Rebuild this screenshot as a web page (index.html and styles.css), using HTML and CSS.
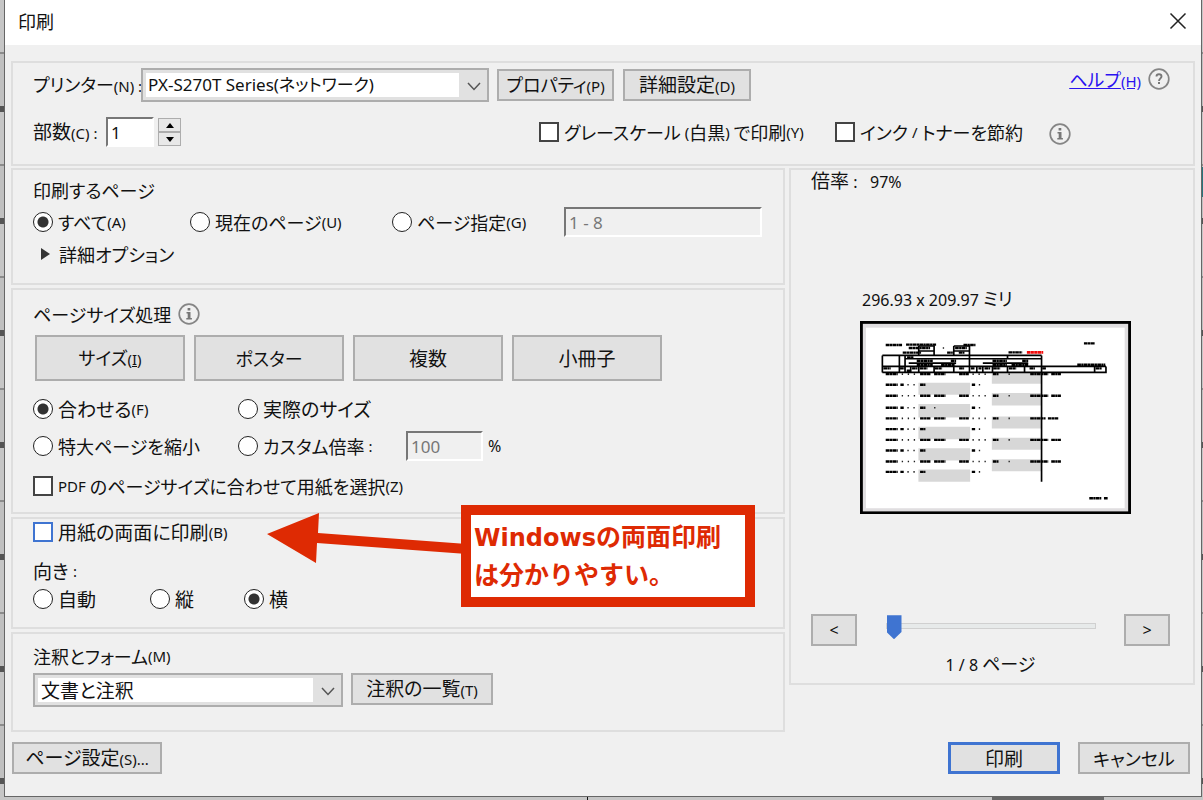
FILE: index.html
```
<!DOCTYPE html>
<html lang="ja">
<head>
<meta charset="utf-8">
<title>印刷</title>
<link rel="stylesheet" href="styles.css">
</head>
<body>
<main class="dialog">
  <header class="titlebar">
    <h1 class="title">印刷</h1>
    <button class="close" type="button" aria-label="閉じる">
      <svg width="18" height="18" viewBox="0 0 18 18"><path d="M1.500 1.500 16.500 16.500M16.500 1.500 1.500 16.500" fill="none" stroke="#222" stroke-width="1.500"/></svg>
    </button>
  </header>

  <div class="content">
    <section class="group printer">
      <div class="printer-row">
        <label class="printer-label kana" for="printer">プリンター<span class="key">(N) :</span></label>
        <div class="combo combo-printer">
          <select id="printer" class="latin"><option>PX-S270T Series(ネットワーク)</option></select>
          <svg class="chevron" width="14" height="9" viewBox="0 0 14 9"><path d="M1 1 7 7.500 13 1" fill="none" stroke="#555" stroke-width="1.500"/></svg>
        </div>
        <button class="btn properties kana" type="button">プロパティ<span class="key">(P)</span></button>
        <button class="btn advanced" type="button">詳細設定<span class="key">(D)</span></button>
        <a class="help kana" href="#">ヘルプ<span class="key">(H)</span></a>
        <svg class="round-icon" width="22" height="22" viewBox="0 0 22 22"><circle cx="11" cy="11" r="9.800" fill="none" stroke="#858585" stroke-width="1.700"/><path d="M8.500 8.600C8.500 5.400 13.500 5.500 13.500 8.500C13.500 10.300 11 10.500 11 13" fill="none" stroke="#777" stroke-width="1.900"/><rect x="10" y="14" width="2" height="2" fill="#777"/></svg>
      </div>
      <div class="copies-row">
        <label class="copies-label" for="copies">部数<span class="key">(C) :</span></label>
        <input id="copies" class="field copies" type="text" value="1">
        <span class="spinner">
          <button type="button" aria-label="増やす"><svg width="8" height="5" viewBox="0 0 8 5"><path d="M0 5 4 0 8 5z"/></svg></button>
          <button type="button" aria-label="減らす"><svg width="8" height="5" viewBox="0 0 8 5"><path d="M0 0 4 5 8 0z"/></svg></button>
        </span>
        <label class="option gray-option kana"><input type="checkbox">グレースケール <span class="key">(</span>白黒<span class="key">)</span> で印刷<span class="key">(Y)</span></label>
        <label class="option ink-option kana"><input type="checkbox">インク <span class="key">/</span> トナーを節約</label>
        <svg class="round-icon ink-info" width="22" height="22" viewBox="0 0 22 22"><circle cx="11" cy="11" r="9.800" fill="none" stroke="#858585" stroke-width="1.700"/><path d="M9.600 5h2.700v2.500H9.600zM8.500 9h4v6h1.400v1.600H8.300V15h1.400v-4.500H8.500z" fill="#777"/></svg>
      </div>
    </section>

    <div class="columns">
      <div class="settings">
        <section class="group pages">
          <h2 class="heading kana">印刷するページ</h2>
          <div class="pages-row">
            <label class="option kana"><input type="radio" name="range" checked>すべて<span class="key">(A)</span></label>
            <label class="option kana"><input type="radio" name="range">現在のページ<span class="key">(U)</span></label>
            <label class="option kana"><input type="radio" name="range">ページ指定<span class="key">(G)</span></label>
            <input class="field" type="text" value="1 - 8" aria-label="ページ指定" disabled>
          </div>
          <button class="more kana" type="button"><svg width="10" height="12" viewBox="0 0 10 12"><path d="M0 0 9 6 0 12z" fill="#333"/></svg>詳細オプション</button>
        </section>

        <section class="group sizing">
          <h2 class="heading kana">ページサイズ処理
            <svg class="round-icon" width="22" height="22" viewBox="0 0 22 22"><circle cx="11" cy="11" r="9.800" fill="none" stroke="#858585" stroke-width="1.700"/><path d="M9.600 5h2.700v2.500H9.600zM8.500 9h4v6h1.400v1.600H8.300V15h1.400v-4.500H8.500z" fill="#777"/></svg>
          </h2>
          <div class="modes">
            <button class="btn mode kana" type="button">サイズ<span class="key">(<u>I</u>)</span></button>
            <button class="btn mode kana" type="button">ポスター</button>
            <button class="btn mode" type="button">複数</button>
            <button class="btn mode" type="button">小冊子</button>
          </div>
          <div class="scale-grid">
            <label class="option"><input type="radio" name="scale" checked>合わせる<span class="key">(F)</span></label>
            <label class="option"><input type="radio" name="scale">実際のサイズ</label>
            <label class="option kana"><input type="radio" name="scale">特大ページを縮小</label>
            <div class="custom">
              <label class="option custom-label kana"><input type="radio" name="scale">カスタム倍率 <span class="key">:</span></label>
              <input class="field custom-value" type="text" value="100" aria-label="カスタム倍率" disabled>
              <span class="num">%</span>
            </div>
          </div>
          <label class="option paper kana"><input type="checkbox"><span class="key">PDF</span> のページサイズに合わせて用紙を選択<span class="key">(Z)</span></label>
        </section>

        <section class="group duplex">
          <label class="option both"><input class="hot" type="checkbox">用紙の両面に印刷<span class="key">(B)</span></label>
          <h2 class="heading">向き <span class="key">:</span></h2>
          <div class="orientation">
            <label class="option"><input type="radio" name="orient">自動</label>
            <label class="option"><input type="radio" name="orient">縦</label>
            <label class="option"><input type="radio" name="orient" checked>横</label>
          </div>
          <svg class="arrow" width="200" height="54" viewBox="0 0 200 54"><path d="M0 21 52 0 51 20 200 31V41L50 30 49 50z" fill="#de2a03"/></svg>
          <p class="callout"><span class="callout-latin">Windows</span>の両面印刷<br>は分かりやすい。</p>
        </section>

        <section class="group comments">
          <label class="heading kana" for="forms">注釈とフォーム<span class="key">(M)</span></label>
          <div class="comments-row">
            <div class="combo combo-forms">
              <select id="forms"><option>文書と注釈</option></select>
              <svg class="chevron" width="14" height="9" viewBox="0 0 14 9"><path d="M1 1 7 7.500 13 1" fill="none" stroke="#555" stroke-width="1.500"/></svg>
            </div>
            <button class="btn summary" type="button">注釈の一覧<span class="key">(T)</span></button>
          </div>
        </section>
      </div>

      <section class="group preview">
        <p class="zoom">倍率 <span class="num">: &nbsp; 97%</span></p>
        <figure class="sheet">
          <figcaption class="kana"><span class="num">296.93 x 209.97</span> ミリ</figcaption>
          <svg class="page" viewBox="30 34 812 579">
            <rect x="34" y="38" width="804" height="571" fill="#e0dee0" stroke="#000" stroke-width="9"/>
            <rect x="48" y="54" width="775" height="541" fill="#fff"/>
            <g fill="#d7d7d7">
              <path d="M205 219h155v36H205zM205 283h155v40H205zM205 351h155v37H205zM205 415h155v37H205zM205 479h155v37H205z"/>
              <path d="M425 190h149v32H425zM425 250h149v37H425zM425 320h149v36H425zM425 384h149v36H425zM425 448h149v36H425z"/>
            </g>
            <g fill="none" stroke="#000" stroke-width="5">
              <path d="M97 137H574M97 137V188M148 137V188M165 137V188M165 147H574M97 170H767M97 188H767V170M206 108V137M206 109H252V137M206 124H252M311 109H358V188M311 109V137M311 124H358M574 137V516M176 160H318M398 160H534M182 170V188M206 170V188M252 170V188M311 170V188M380 170V188M398 170V188M427 170V188M472 137V147M472 170V188M523 170V188M733 170V188"/>
            </g>
            <g fill="none" stroke="#000" stroke-width="7" stroke-dasharray="11 1 7 1">
              <path d="M107 106H156M168 105H258M340 106H376M176 115H240M315 115H350M158 129H213M291 129H308M326 129H343M475 128H516M701 101H734M171 143H191M200 153H248M302 153H318M200 165H248M273 165H315M427 153H470M516 153H534M427 165H470M484 165H534M681 165H765M100 176H122M150 176H164M170 183H180M186 176H202M209 176H232M254 176H276M327 176H342M362 176H374M385 176H394M403 176H420M429 176H450M476 176H498M538 176H554M576 176H587M736 176H754M717 565H753M761 565H772"/>
              <path d="M107 193H143M210 193H241M252 193H286M327 193H356M428 193H445M540 193H594M603 193H632"/>
              <path d="M107 225H143M151 225H161M210 225H226M365 225H375"/>
              <path d="M107 258H143M210 258H241M252 258H286M327 258H356M428 258H445M540 258H594M603 258H632"/>
              <path d="M107 294H143M151 294H161M210 294H226M365 294H375"/>
              <path d="M107 326H143M210 326H241M252 326H286M327 326H356M428 326H445M540 326H586M593 326H625"/>
              <path d="M107 358H143M151 358H161M210 358H226M365 358H375"/>
              <path d="M107 390H143M210 390H241M252 390H286M327 390H356M428 390H445M540 390H594M603 390H632"/>
              <path d="M107 422H143M151 422H161M210 422H226M365 422H375"/>
              <path d="M107 455H143M210 455H241M252 455H286M327 455H356M428 455H445M540 455H594M603 455H632"/>
              <path d="M107 486H143M151 486H161M210 486H226M365 486H375"/>
            </g>
            <g fill="none" stroke="#222" stroke-width="5">
              <path stroke-dasharray="4 14" d="M155 193H202M155 258H202M155 326H202M155 390H202M155 455H202M172 225H202M172 294H202M172 358H202M172 422H202M172 486H202M367 193H415M367 258H415M367 326H415M367 390H415M367 455H415M386 225H392M386 294H392M386 358H392M386 422H392M386 486H392M475 193H480M475 258H480M475 326H480M475 390H480M475 455H480M278 115H285M252 294H258"/>
            </g>
            <path d="M530 128H579" stroke="#f00b0b" stroke-width="8" stroke-dasharray="10 1"/>
          </svg>
        </figure>
        <div class="pager">
          <button class="btn step" type="button">&lt;</button>
          <input class="slider" type="range" min="1" max="8" value="1" aria-label="ページ">
          <button class="btn step" type="button">&gt;</button>
        </div>
        <p class="page-count kana"><span class="num">1 / 8</span> ページ</p>
      </section>
    </div>

    <footer class="footer">
      <button class="btn setup" type="button">ページ設定<span class="key">(S)...</span></button>
      <button class="btn action default" type="button">印刷</button>
      <button class="btn action kana" type="button">キャンセル</button>
    </footer>
  </div>
</main>
</body>
</html>
```
FILE: styles.css
```
* { box-sizing: border-box; }

body {
  margin: 0;
  min-height: 100vh;
  padding: 0 1px 3px 4px;
  display: flex;
  background:
    linear-gradient(#111, #111) 587px 100% / 1px 3px no-repeat,
    linear-gradient(#666, #666) 992px 100% / 112px 3px no-repeat,
    linear-gradient(#27757d, #27757d) 100% 167px / 1px 30px no-repeat,
    repeating-linear-gradient(#c6c6c6 0 52px, #8c8c8c 52px 54px, #c0c0c0 54px 106px, #555 106px 112px);
  color: #111;
  font: 19px/24px "Noto Sans CJK JP", sans-serif;
  font-feature-settings: "palt";
}

button, input, select { font: inherit; font-feature-settings: inherit; color: inherit; }
h1, h2, p, figure { margin: 0; font-size: 19px; font-weight: 400; }

.key, .num { font-family: "Noto Sans", sans-serif; white-space: nowrap; }
.key { font-size: 15px; }
.num { font-size: 16px; }

.dialog {
  flex: 1;
  display: flex;
  flex-direction: column;
  background: #f0f0f0;
  border: 1px solid #666;
  border-top: 0;
}

.titlebar {
  display: flex;
  align-items: center;
  justify-content: space-between;
  height: 45px;
  padding: 0 14px 4px 13px;
  background: #fff;
}
.title { font-size: 18px; }
.close { display: flex; padding: 0; border: 0; background: none; }

.content { flex: 1; padding: 16px 6px 0; }
.group { position: relative; border: 2px solid #dedede; }

.printer { height: 105px; padding: 5px 23px 0 20px; }
.printer-row { display: flex; align-items: center; height: 34px; }
.printer-label { width: 108px; white-space: nowrap; }
.copies-row { display: flex; align-items: center; height: 32px; margin-top: 14px; }
.copies-label { width: 73px; white-space: nowrap; }

.combo { position: relative; background: #e1e1e1; border: 2px solid #adadad; padding: 3px 28px 3px 3px; }
.combo select {
  appearance: none;
  display: block;
  width: 100%;
  height: 24px;
  padding: 0 3px;
  border: 0;
  background: #fff;
  line-height: 22px;
}
.combo .latin { font-family: "Noto Sans", "Noto Sans CJK JP", sans-serif; font-size: 17px; padding: 0 2px; }
.chevron { position: absolute; right: 6px; top: 12px; pointer-events: none; }
.combo-printer { width: 348px; }
.combo-forms { width: 310px; }

.btn {
  padding: 0;
  border: 2px solid #adadad;
  background: #e1e1e1;
  height: 32px;
  line-height: 24px;
  white-space: nowrap;
}
.properties { width: 117px; margin-left: 8px; }
.advanced { width: 128px; margin-left: 9px; }
.help { margin: 0 7px 10px auto; color: #2a12f0; white-space: nowrap; text-decoration: underline; }
.printer-row .round-icon { margin-bottom: 12px; }
.round-icon { flex: none; }

.field {
  height: 30px;
  padding: 0 3px;
  border: 2px solid;
  border-color: #777 #fff #fff #777;
  background: #fff;
  font: 17px/24px "Noto Sans", sans-serif;
  border-radius: 0;
  min-width: 0;
}
.field:disabled { background: #f0f0f0; color: #777; }
.copies { width: 48px; margin-right: 4px; }
.spinner { display: grid; width: 23px; height: 28px; }
.spinner button { display: grid; place-items: center; padding: 0; border: 1px solid #adadad; background: #e8e8e8; }

.option { display: flex; align-items: center; white-space: pre; }
.option input {
  appearance: none;
  flex: none;
  width: 20px;
  height: 20px;
  margin: 0 5px 0 0;
  border: 2px solid #444;
  background: #fff;
}
.option input[type="radio"] { border-radius: 50%; border-width: 1px; border-color: #222; }
.option input[type="radio"]:checked { background: radial-gradient(#333 0 5px, #fff 6px); }
.option .hot { border-color: #3f74d1; }
.gray-option { margin-left: auto; width: 296px; }
.ink-option { width: 214px; }
.ink-info { margin: 4px 99px 0 0; }

.columns { display: grid; grid-template-columns: minmax(0, 1fr) 406px; gap: 4px; align-items: start; margin-top: 2px; }
.settings { display: grid; gap: 3px; }
.heading { display: flex; align-items: center; white-space: pre; }

.pages { min-height: 117px; padding: 4px 20px 0; }
.pages .heading, .pages-row, .more { height: 32px; }
.pages-row { display: grid; grid-template-columns: 157px 202px 172px 198px; align-items: center; }
.more { display: flex; align-items: center; gap: 8px; padding: 0 8px; border: 0; background: none; }

.sizing { min-height: 226px; padding: 8px 20px 0; }
.sizing .heading { height: 32px; white-space: nowrap; gap: 7px; }
.modes { display: flex; gap: 9px; margin: 5px 2px 10px; }
.mode { width: 150px; height: 46px; }
.scale-grid { display: grid; grid-template-columns: 205px 1fr; grid-auto-rows: 36px; align-items: center; gap: 1px 0; }
.custom { display: flex; align-items: center; }
.custom-label { width: 168px; }
.custom-value { width: 77px; margin-right: 5px; }
.paper { height: 36px; margin-top: 4px; }

.duplex { min-height: 112px; padding: 0 20px; }
.both { height: 26px; }
.duplex .heading { height: 26px; margin-top: 13px; }
.orientation { display: grid; grid-template-columns: 117px 94px auto; height: 30px; }
.arrow { position: absolute; left: 254px; top: -6px; }
.callout {
  position: absolute;
  left: 448px;
  top: -14px;
  width: 294px;
  padding: 1px 3px 5px;
  border: 10px solid #de2a03;
  background: #fff;
  color: #de2a03;
  font-size: 25px;
  font-weight: 700;
  line-height: 38px;
  font-feature-settings: normal;
  white-space: nowrap;
}
.callout-latin { font-family: "DejaVu Sans", sans-serif; font-size: 24px; line-height: 24px; }

.comments { min-height: 100px; padding: 8px 20px 0; }
.comments .heading { height: 28px; }
.comments-row { display: flex; gap: 8px; margin-top: 3px; }
.summary { width: 142px; }

.preview { min-height: 517px; padding: 0 23px 0 20px; }
.zoom { line-height: 20px; }
.sheet { width: 271px; margin: 94px auto 0 49px; }
.sheet figcaption { height: 35px; padding-left: 2px; }
.page { display: block; width: 100%; }
.pager { display: flex; justify-content: space-between; align-items: center; margin-top: 100px; }
.step { width: 46px; font-family: "Noto Sans", sans-serif; font-size: 16px; }
.slider { appearance: none; width: 210px; height: 24px; margin: 0 0 8px; background: none; }
.slider::-webkit-slider-runnable-track { height: 6px; border: 1px solid #d0d0d0; background: #e7eaea; }
.slider::-webkit-slider-thumb {
  appearance: none;
  width: 15px;
  height: 24px;
  margin-top: -9px;
  background: #3f74d1;
  clip-path: polygon(0 0, 100% 0, 100% 70%, 50% 100%, 0 70%);
}
.page-count { margin-top: 5px; text-align: center; }

.footer { display: flex; margin: 10px 5px 10px 1px; }
.setup { width: 150px; margin-right: auto; }
.action { width: 112px; margin-left: 18px; }
.default { border: 3px solid #3f74d1; line-height: 22px; }

.kana { font-size: 18px; }
```
